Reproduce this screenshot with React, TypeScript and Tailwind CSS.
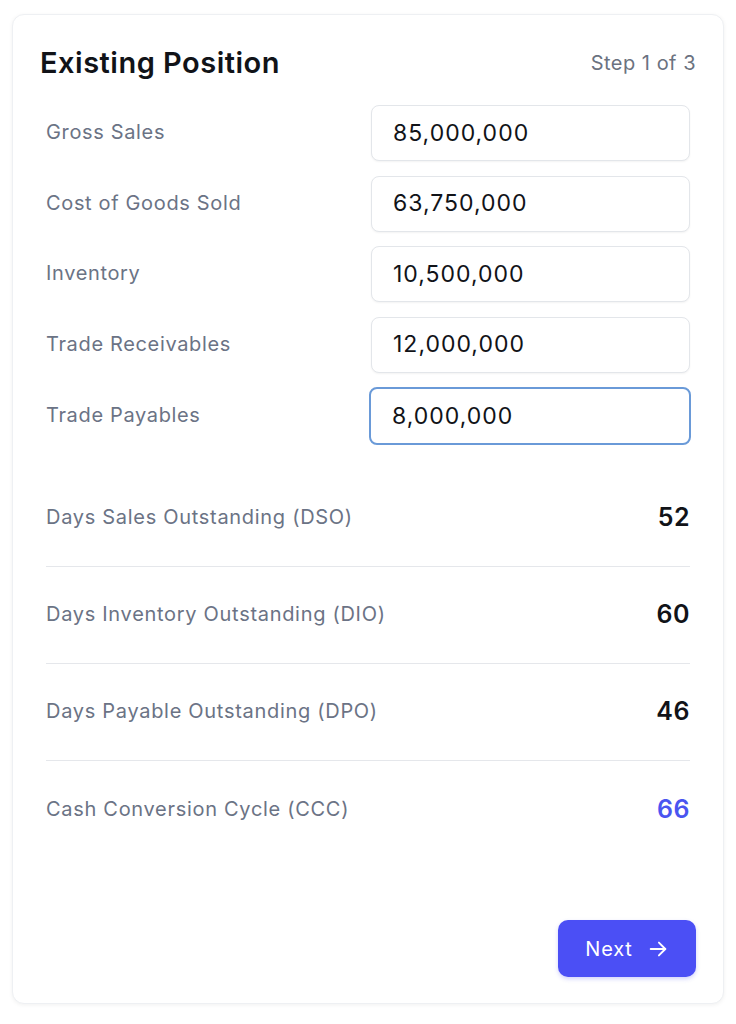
import React from "react";

const inputs = [
  { label: "Gross Sales", value: "85,000,000" },
  { label: "Cost of Goods Sold", value: "63,750,000" },
  { label: "Inventory", value: "10,500,000" },
  { label: "Trade Receivables", value: "12,000,000" },
  { label: "Trade Payables", value: "8,000,000", focused: true },
];

const metrics = [
  { label: "Days Sales Outstanding (DSO)", value: "52" },
  { label: "Days Inventory Outstanding (DIO)", value: "60" },
  { label: "Days Payable Outstanding (DPO)", value: "46" },
  { label: "Cash Conversion Cycle (CCC)", value: "66", accent: true },
];

export default function App() {
  return (
    <div className="min-h-[1024px] w-[736px] bg-white pt-[14px] px-[12px]" style={{ fontFamily: "Inter, 'Noto Sans', sans-serif" }}>
      <div className="w-[712px] h-[990px] rounded-[12px] border border-[#eef0f3] bg-white shadow-[0_1px_4px_rgba(0,0,0,0.06)] px-[27px] pt-[30px] pb-[26px] flex flex-col">
        <div className="flex items-center justify-between">
          <h1 className="text-[29px] leading-[36px] font-semibold text-[#111318] tracking-[0.5px]">Existing Position</h1>
          <span className="text-[20px] text-[#6b7280] tracking-[0.5px]">Step 1 of 3</span>
        </div>

        <div className="mt-[24px] px-[6px] flex flex-col gap-[14.5px]">
          {inputs.map((r) => (
            <div key={r.label} className="flex items-center justify-between">
              <span className="text-[20px] text-[#6b7385] tracking-[0.65px] -mt-[2px]">{r.label}</span>
              <div
                className={
                  r.focused
                    ? "w-[322px] h-[58px] -mr-[1px] rounded-[8px] border-[2px] border-[#6a9ad8] bg-white flex items-center pl-[21px] text-[23px] tracking-[1px] text-[#111318]"
                    : "w-[319px] h-[56px] rounded-[8px] border border-[#e3e6ea] bg-white shadow-[0_1px_2px_rgba(0,0,0,0.05)] flex items-center pl-[21px] text-[23px] tracking-[1px] text-[#111318]"
                }
              >
                {r.value}
              </div>
            </div>
          ))}
        </div>

        <div className="mt-[25px] px-[6px] flex flex-col">
          {metrics.map((m, i) => (
            <div
              key={m.label}
              className={
                "h-[97px] flex items-center justify-between " +
                (i < metrics.length - 1 ? "border-b border-[#e5e7eb]" : "")
              }
            >
              <span className="text-[20px] text-[#6b7385] tracking-[0.7px] -mt-[2px]">{m.label}</span>
              <span className={"text-[25px] font-semibold tracking-[0.5px] " + (m.accent ? "text-[#4a55f0]" : "text-[#111318]")}>{m.value}</span>
            </div>
          ))}
        </div>

        <div className="mt-auto flex justify-end">
          <button className="w-[138px] h-[57px] rounded-[10px] bg-[#4b4ff5] text-white text-[20px] font-normal tracking-[0.8px] flex items-center justify-center gap-[14px] shadow-[0_2px_4px_rgba(75,79,245,0.25)]">
            <span>Next</span>
            <svg width="22" height="22" viewBox="0 0 24 24" fill="none" stroke="currentColor" strokeWidth="2" strokeLinecap="round" strokeLinejoin="round">
              <path d="M4 12h16" />
              <path d="M13 5l7 7-7 7" />
            </svg>
          </button>
        </div>
      </div>
    </div>
  );
}
